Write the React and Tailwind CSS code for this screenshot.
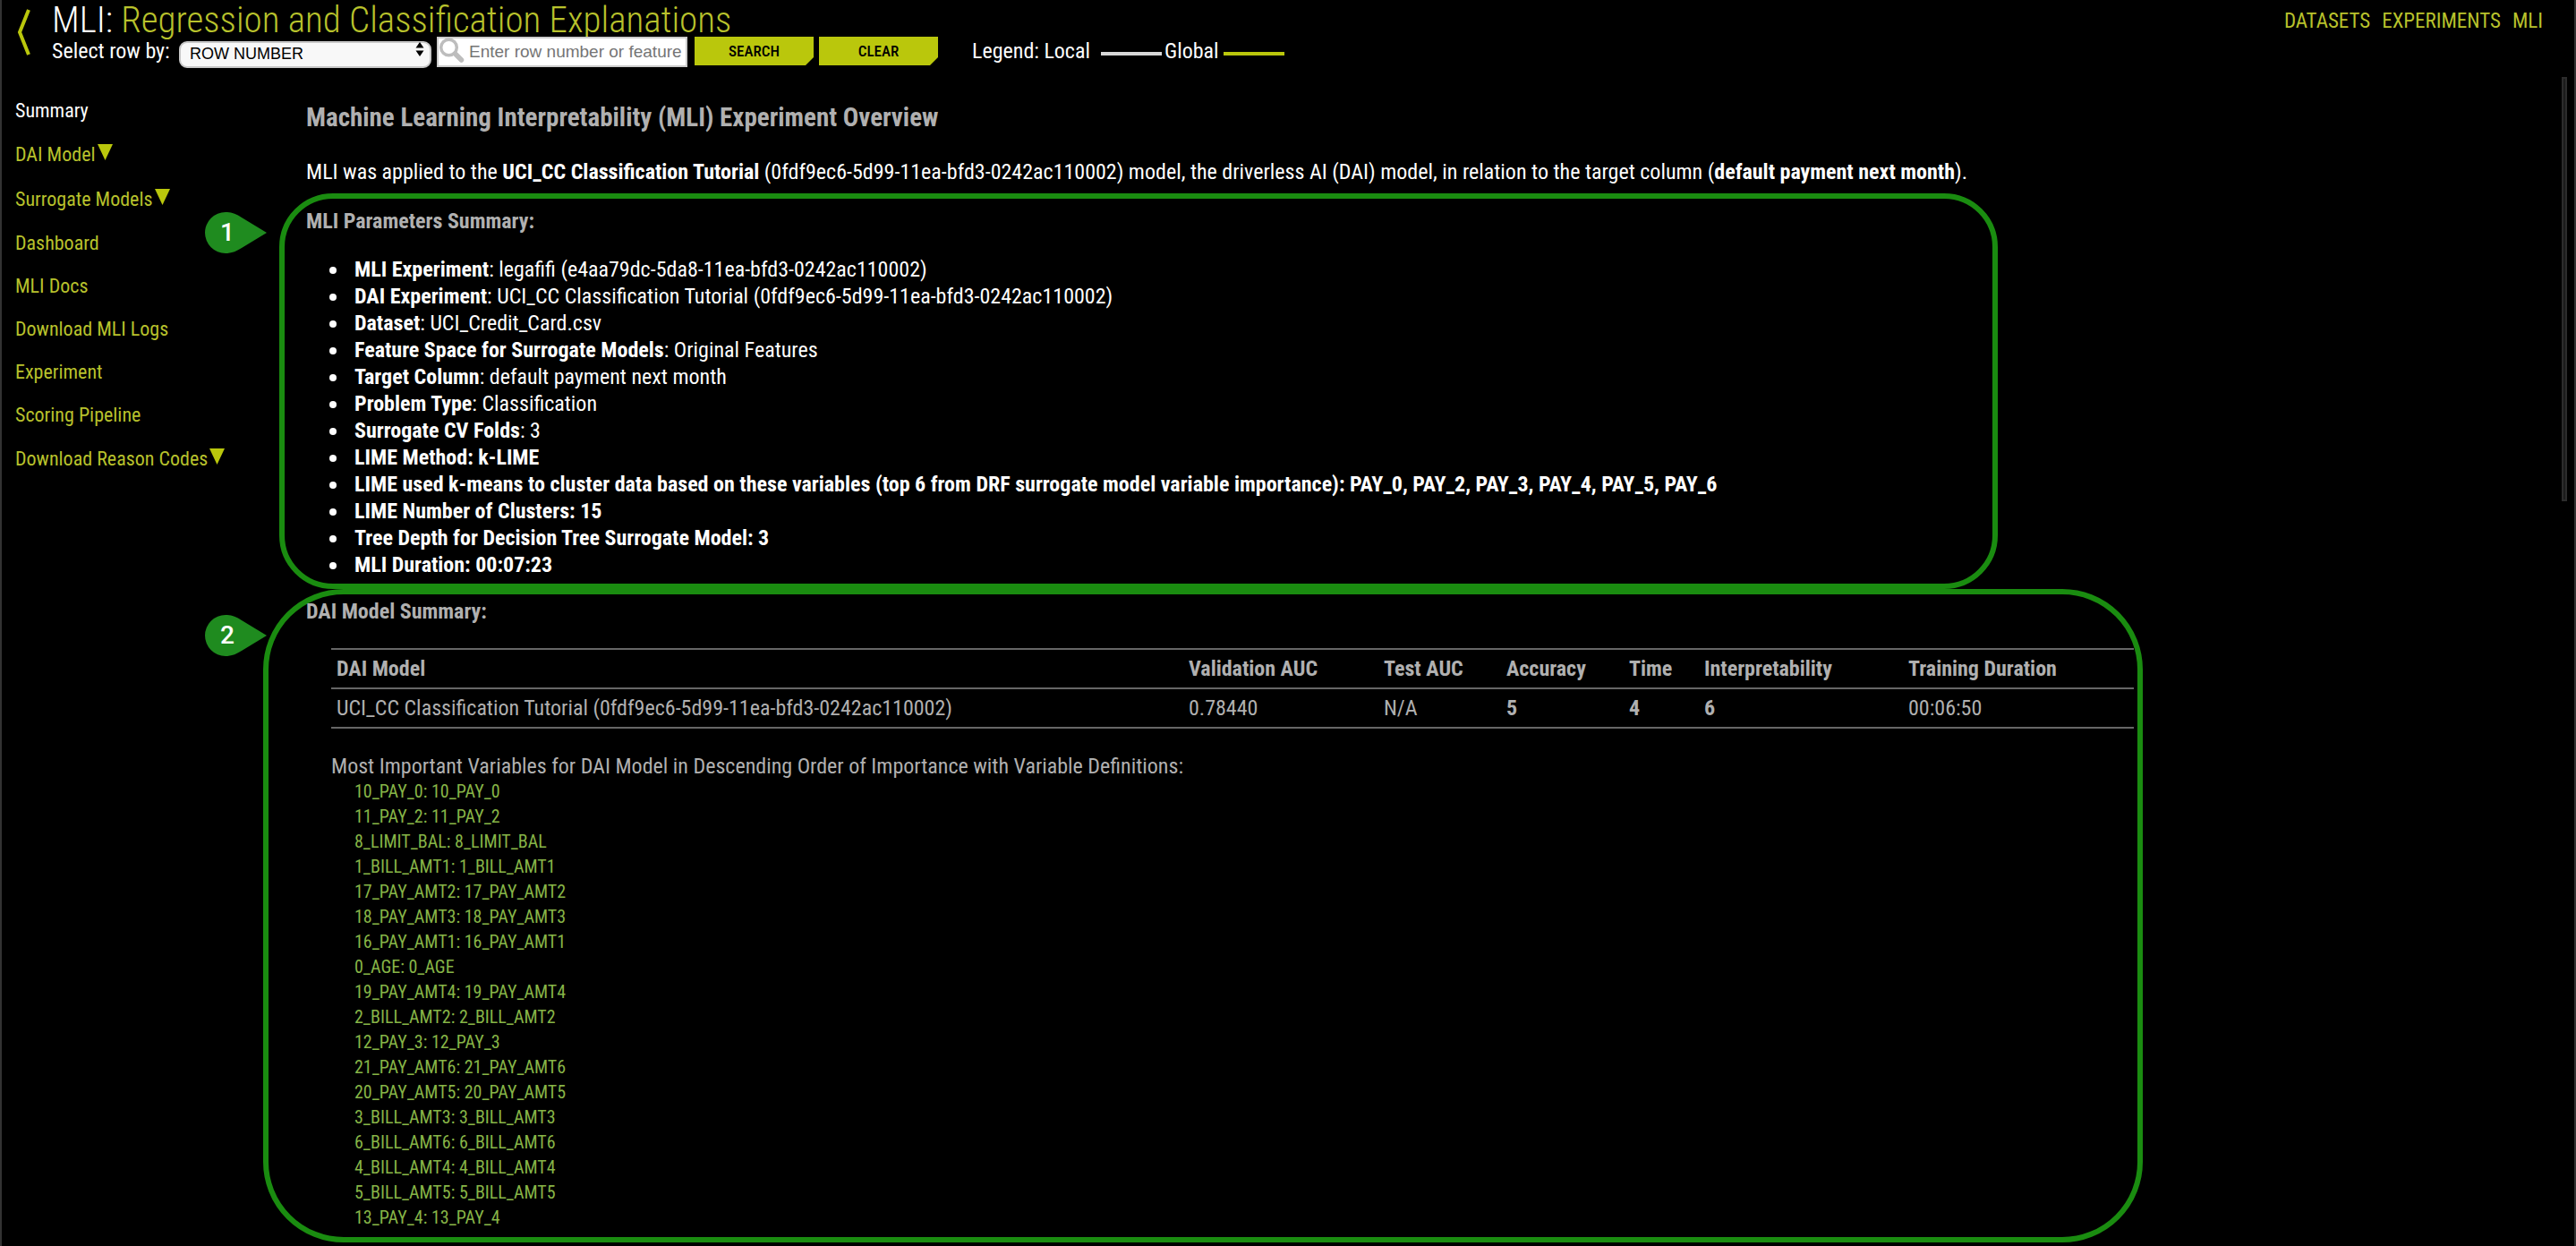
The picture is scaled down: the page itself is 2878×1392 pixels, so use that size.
import React from "react";

const NAV = [
  { label: "Summary", active: true },
  { label: "DAI Model", menu: true },
  { label: "Surrogate Models", menu: true },
  { label: "Dashboard" },
  { label: "MLI Docs" },
  { label: "Download MLI Logs" },
  { label: "Experiment" },
  { label: "Scoring Pipeline" },
  { label: "Download Reason Codes", menu: true },
];

const PARAMS = [
  ["MLI Experiment", ": legafifi (e4aa79dc-5da8-11ea-bfd3-0242ac110002)"],
  ["DAI Experiment", ": UCI_CC Classification Tutorial (0fdf9ec6-5d99-11ea-bfd3-0242ac110002)"],
  ["Dataset", ": UCI_Credit_Card.csv"],
  ["Feature Space for Surrogate Models", ": Original Features"],
  ["Target Column", ": default payment next month"],
  ["Problem Type", ": Classification"],
  ["Surrogate CV Folds", ": 3"],
  ["LIME Method: k-LIME", ""],
  [
    "LIME used k-means to cluster data based on these variables (top 6 from DRF surrogate model variable importance): PAY_0, PAY_2, PAY_3, PAY_4, PAY_5, PAY_6",
    "",
  ],
  ["LIME Number of Clusters: 15", ""],
  ["Tree Depth for Decision Tree Surrogate Model: 3", ""],
  ["MLI Duration: 00:07:23", ""],
];

const VARIABLES = [
  "10_PAY_0",
  "11_PAY_2",
  "8_LIMIT_BAL",
  "1_BILL_AMT1",
  "17_PAY_AMT2",
  "18_PAY_AMT3",
  "16_PAY_AMT1",
  "0_AGE",
  "19_PAY_AMT4",
  "2_BILL_AMT2",
  "12_PAY_3",
  "21_PAY_AMT6",
  "20_PAY_AMT5",
  "3_BILL_AMT3",
  "6_BILL_AMT6",
  "4_BILL_AMT4",
  "5_BILL_AMT5",
  "13_PAY_4",
];

function Pin({ n }) {
  return (
    <div className="absolute top-[21px] right-full w-[69px] h-[46px] flex items-center">
      <svg viewBox="0 0 69 46" className="absolute inset-0 w-full h-full" aria-hidden="true">
        <path d="M69 23 L41 6 C35 2 29 0 23 0 A23 23 0 0 0 23 46 C29 46 35 44 41 40 Z" fill="#1f8b1f" />
      </svg>
      <span className="relative w-[50px] text-center text-white text-[28px] leading-[46px] font-medium font-['Roboto',sans-serif]">
        {n}
      </span>
    </div>
  );
}

function ClippedButton({ type, children }) {
  return (
    <button
      type={type}
      className="h-8 w-[133px] bg-[#bac70c] text-black text-[17px] leading-8 font-medium [clip-path:polygon(0_0,100%_0,100%_72%,calc(100%_-_9px)_100%,0_100%)]"
    >
      {children}
    </button>
  );
}

function Header() {
  return (
    <header className="flex items-start justify-between pl-4 pr-[35px]">
      <div className="flex items-start">
        <a href="#back" aria-label="Back" className="block pt-2 w-10">
          <svg viewBox="0 0 20 56" className="w-5 h-14" fill="none" aria-hidden="true">
            <path d="M14 3 L4 28 L14 53" stroke="#bac70c" strokeWidth="4" />
          </svg>
        </a>
        <div className="pt-1">
          <h1 className="text-[41px] leading-9 font-light text-white whitespace-nowrap">
            MLI: <span className="text-[#b8c22c]">Regression and Classification Explanations</span>
          </h1>
          <form className="flex items-center h-[34px] text-white text-[24px] leading-8 whitespace-nowrap" onSubmit={(e) => e.preventDefault()}>
            <label htmlFor="row-by" className="w-[142px]">Select row by:</label>
            <div className="relative w-[282px] h-[30px]">
              <select
                id="row-by"
                defaultValue="row"
                className="appearance-none w-full h-full rounded-[9px] border-2 border-[#c8c8c8] bg-[#f8f8f8] pl-[10px] pb-[2px] text-[18px] leading-6 text-black font-['Liberation_Sans',Arial,sans-serif]"
              >
                <option value="row">ROW NUMBER</option>
              </select>
              <svg viewBox="0 0 10 16" className="absolute right-2 top-[5px] w-[10px] h-4 pointer-events-none" aria-hidden="true">
                <path d="M5 0 L9.5 6.5 H0.5 Z M5 16 L9.5 9.5 H0.5 Z" fill="#000" />
              </svg>
            </div>
            <div className="relative ml-[6px] w-[280px] h-[34px]">
              <input
                type="text"
                aria-label="Row number or feature"
                placeholder="Enter row number or feature"
                className="w-full h-full border-2 border-[#ccc] bg-white pl-[34px] text-[19px] text-black placeholder:text-[#757575] font-['Liberation_Sans',Arial,sans-serif]"
              />
              <svg viewBox="0 0 30 30" className="absolute left-[2px] top-[2px] w-[30px] h-[30px]" fill="none" stroke="#bdbdbd" aria-hidden="true">
                <circle cx="11.5" cy="11" r="8.8" strokeWidth="3.5" />
                <path d="M18.5 18 L25.5 25" strokeWidth="5.5" strokeLinecap="round" />
              </svg>
            </div>
            <div className="flex gap-[6px] ml-2">
              <ClippedButton type="submit">SEARCH</ClippedButton>
              <ClippedButton type="reset">CLEAR</ClippedButton>
            </div>
            <div className="flex items-center ml-[38px]">
              <span>Legend: Local</span>
              <span className="ml-3 mt-[6px] w-[68px] h-1 bg-[#d8d8d8]" />
              <span className="ml-[3px]">Global</span>
              <span className="ml-[5px] mt-[6px] w-[68px] h-1 bg-[#bac70c]" />
            </div>
          </form>
        </div>
      </div>
      <nav aria-label="Site" className="flex gap-[13px] pt-2 text-[23px] leading-8 text-[#b8c22c]">
        <a href="#datasets">DATASETS</a>
        <a href="#experiments">EXPERIMENTS</a>
        <a href="#mli">MLI</a>
      </nav>
    </header>
  );
}

function Sidebar() {
  return (
    <nav aria-label="MLI views" className="w-[292px] shrink-0 pl-[15px] pt-[25px] text-[22px] text-[#b8c22c]">
      <ul>
        {NAV.map(({ label, active, menu }) => (
          <li key={label} className={menu ? "flex items-center h-[50px]" : "flex items-center h-12"}>
            {menu ? (
              <button type="button" className="flex items-center gap-[2px]">
                {label}
                <svg viewBox="0 0 17 18" className="w-[17px] h-[18px] mb-1" aria-hidden="true">
                  <path d="M0 0 H17 L8.5 18 Z" fill="#bac70c" />
                </svg>
              </button>
            ) : (
              <a href="#view" className={active ? "text-white" : ""}>{label}</a>
            )}
          </li>
        ))}
      </ul>
    </nav>
  );
}

const TH = "h-11 px-[6px] text-left align-middle font-bold border-b-2 border-[#666] whitespace-nowrap";
const TD = "h-11 px-[6px] text-left align-middle border-b-2 border-[#666] whitespace-nowrap";

function ModelTable() {
  return (
    <table className="w-full table-fixed border-separate border-spacing-0 border-t-2 border-[#666]">
      <colgroup>
        <col />
        <col className="w-[218px]" />
        <col className="w-[137px]" />
        <col className="w-[137px]" />
        <col className="w-[84px]" />
        <col className="w-[228px]" />
        <col className="w-[258px]" />
      </colgroup>
      <thead>
        <tr>
          <th className={TH}>DAI Model</th>
          <th className={TH}>Validation AUC</th>
          <th className={TH}>Test AUC</th>
          <th className={TH}>Accuracy</th>
          <th className={TH}>Time</th>
          <th className={TH}>Interpretability</th>
          <th className={TH}>Training Duration</th>
        </tr>
      </thead>
      <tbody>
        <tr>
          <td className={TD}>UCI_CC Classification Tutorial (0fdf9ec6-5d99-11ea-bfd3-0242ac110002)</td>
          <td className={TD}>0.78440</td>
          <td className={TD}>N/A</td>
          <td className={TD}><b>5</b></td>
          <td className={TD}><b>4</b></td>
          <td className={TD}><b>6</b></td>
          <td className={TD}>00:06:50</td>
        </tr>
      </tbody>
    </table>
  );
}

export default function App() {
  return (
    <div className="min-h-screen bg-black border-x-2 border-[#333] font-['Roboto_Condensed',Roboto,sans-serif]">
      <Header />
      <div className="relative flex">
        <Sidebar />
        <main className="flex-1 min-w-0 pt-10 pb-1 mr-[482px] text-[24px] leading-[30px] text-[#b0b0b0]">
          <div className="pl-12">
            <h2 className="text-[29px] leading-[34px] font-bold">
              Machine Learning Interpretability (MLI) Experiment Overview
            </h2>
            <p className="mt-7 leading-8 text-white">
              MLI was applied to the <b>UCI_CC Classification Tutorial</b> (0fdf9ec6-5d99-11ea-bfd3-0242ac110002) model, the driverless AI (DAI) model, in relation to the target column (<b>default payment next month</b>).
            </p>
          </div>

          <section className="relative mt-2 ml-[18px] mr-[162px] border-[6px] border-[#1a8c10] rounded-[60px] pl-6 pt-[10px] pb-[6px]">
            <div className="absolute -top-[6px] -left-[20px]">
              <Pin n="1" />
            </div>
            <h3 className="font-bold">MLI Parameters Summary:</h3>
            <ul className="mt-6 pl-[54px] text-white">
              {PARAMS.map(([name, value]) => (
                <li
                  key={name}
                  className="relative before:absolute before:-left-7 before:top-3 before:size-2 before:rounded-full before:bg-white"
                >
                  <b>{name}</b>
                  {value}
                </li>
              ))}
            </ul>
          </section>

          <section className="relative border-[6px] border-[#1a8c10] rounded-[90px] pl-[42px] pr-1 pt-1 pb-2">
            <div className="absolute top-[2px] -left-[2px]">
              <Pin n="2" />
            </div>
            <h3 className="font-bold">DAI Model Summary:</h3>
            <div className="mt-[26px] pl-7">
              <ModelTable />
              <p className="mt-7 leading-7">
                Most Important Variables for DAI Model in Descending Order of Importance with Variable Definitions:
              </p>
              <ul className="pl-[26px] text-[20px] leading-7 text-[#87b547]">
                {VARIABLES.map((v) => (
                  <li key={v}>
                    {v}: {v}
                  </li>
                ))}
              </ul>
            </div>
          </section>
        </main>
        <div className="absolute top-3 right-2 w-[6px] h-[474px] bg-[#1c1c1c] border-2 border-[#2c2c2c]" />
      </div>
    </div>
  );
}
